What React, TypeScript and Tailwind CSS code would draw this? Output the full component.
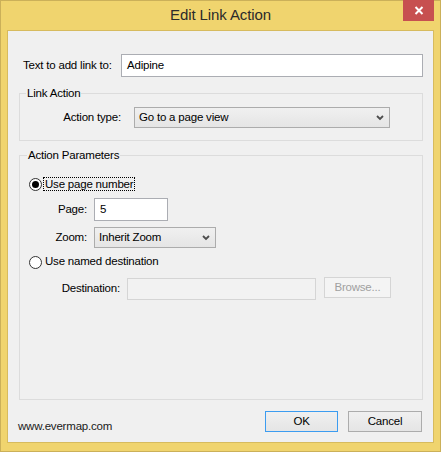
import React from 'react';

const font = "font-['Liberation_Sans',Arial,sans-serif]";

const Chevron: React.FC = () => (
  <svg width="8" height="6" viewBox="0 0 8 6" className="shrink-0">
    <path d="M1 1 L4 4 L7 1" fill="none" stroke="#4d4d4d" strokeWidth="1.8" />
  </svg>
);

const Combo: React.FC<{ value: string; width: string }> = ({ value, width }) => (
  <div
    className={`${width} h-[21px] flex items-center justify-between pl-[4px] pr-[5px] border border-[#acacac] bg-gradient-to-b from-[#f0f0f0] to-[#e5e5e5]`}
  >
    <span>{value}</span>
    <Chevron />
  </div>
);

const Radio: React.FC<{ checked?: boolean }> = ({ checked }) => (
  <span className="w-[13px] h-[13px] rounded-full border border-[#333333] bg-white flex items-center justify-center shrink-0">
    {checked && <span className="w-[7px] h-[7px] rounded-full bg-black" />}
  </span>
);

const Button: React.FC<{ label: string; primary?: boolean; width: string }> = ({ label, primary, width }) => (
  <button
    className={`${width} h-[21px] border ${
      primary ? 'border-[#3c9cf0]' : 'border-[#acacac]'
    } bg-gradient-to-b from-[#f0f0f0] to-[#e5e5e5] text-black flex items-center justify-center`}
  >
    {label}
  </button>
);

export default function App() {
  return (
    <div
      className={`${font} relative w-[441px] h-[452px] bg-[#f0d46e] border border-[#cbb059] text-[11.5px] tracking-[-0.2px] text-black`}
    >
      {/* title bar */}
      <div className="h-[29px] flex items-center justify-center text-[15px] tracking-[-0.1px] text-[#2b2b2b]">
        Edit Link Action
      </div>
      <div className="absolute top-[-1px] right-[6px] w-[31px] h-[21px] bg-[#c75050] flex items-center justify-center">
        <svg width="10" height="9" viewBox="0 0 10 9">
          <path d="M1.5 1 L8.5 8 M8.5 1 L1.5 8" stroke="#ffffff" strokeWidth="2" />
        </svg>
      </div>

      {/* client area */}
      <div className="mx-[6px] h-[413px] border border-[#d7bb5e] bg-[#f0f0f0] flex flex-col">
        <div className="mt-[23px] flex items-center pl-[15px]">
          <span className="w-[98px]">Text to add link to:</span>
          <div className="w-[302px] h-[23px] border border-[#abadb3] bg-white flex items-center px-[5px]">
            Adipine
          </div>
        </div>

        <fieldset className="mt-[8px] ml-[11px] mr-[10px] border border-[#dcdcdc] pt-[6px] pb-[12px]">
          <legend className="ml-[6px] px-[1px] leading-[16px]">Link Action</legend>
          <div className="flex items-center">
            <span className="w-[114px] text-right pr-[13px]">Action type:</span>
            <Combo value="Go to a page view" width="w-[256px]" />
          </div>
        </fieldset>

        <fieldset className="mt-[6px] ml-[11px] mr-[10px] h-[253px] border border-[#dcdcdc]">
          <legend className="ml-[7px] px-[1px] leading-[16px]">Action Parameters</legend>

          <div className="mt-[13px] h-[16px] flex items-center pl-[9px]">
            <Radio checked />
            <span className="ml-[1px] px-[1px] leading-[12px] border border-dotted border-black">
              Use page number
            </span>
          </div>

          <div className="mt-[6px] flex items-center">
            <span className="w-[74px] text-right pr-[7px]">Page:</span>
            <div className="w-[74px] h-[23px] border border-[#abadb3] bg-white flex items-center px-[5px]">5</div>
          </div>

          <div className="mt-[6px] flex items-center">
            <span className="w-[74px] text-right pr-[7px]">Zoom:</span>
            <Combo value="Inherit Zoom" width="w-[122px]" />
          </div>

          <div className="mt-[6px] h-[16px] flex items-center pl-[9px]">
            <Radio />
            <span className="ml-[2px] px-[1px]">Use named destination</span>
          </div>

          <div className="mt-[7px] flex items-start">
            <span className="mt-[1px] h-[22px] w-[107px] flex items-center justify-end pr-[7px]">Destination:</span>
            <div className="mt-[1px] w-[189px] h-[22px] border border-[#d5d5d5] bg-[#f2f2f2]" />
            <div className="ml-[8px] w-[67px] h-[21px] border border-[#d5d5d5] bg-[#f4f4f4] text-[#a0a0a0] flex items-center justify-center">
              Browse...
            </div>
          </div>
        </fieldset>

        <div className="mt-[11px] flex items-start pl-[10px] pr-[11px]">
          <span className="mt-[7px] text-[#1a1a1a]">www.evermap.com</span>
          <div className="ml-auto flex gap-[10px]">
            <Button label="OK" primary width="w-[73px]" />
            <Button label="Cancel" width="w-[74px]" />
          </div>
        </div>
      </div>
    </div>
  );
}
